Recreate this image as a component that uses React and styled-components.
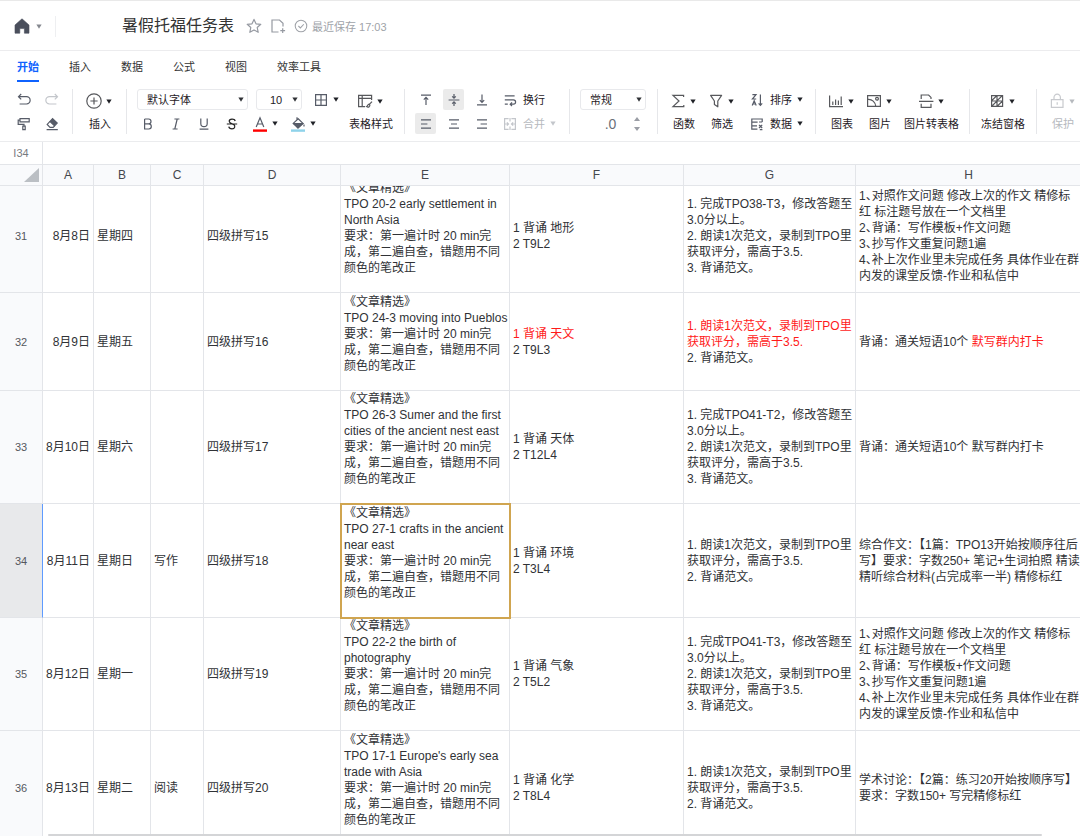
import React, { useEffect, useRef, useState } from 'react';
import styled, { createGlobalStyle, css } from 'styled-components';

const columns = [
  { name: 'A', width: 51 },
  { name: 'B', width: 57 },
  { name: 'C', width: 53 },
  { name: 'D', width: 137 },
  { name: 'E', width: 169 },
  { name: 'F', width: 174 },
  { name: 'G', width: 172 },
  { name: 'H', width: 226 },
];

const red = (text) => ({ text, red: true });

// list number followed by a half-width 、
const item = (number, text) => [{ text: `${number}、`, marker: true }, text];

const reading = (...title) => [
  '《文章精选》',
  ...title,
  '要求：第一遍计时 20 min完',
  '成，第二遍自查，错题用不同',
  '颜色的笔改正',
  ' ',
];

const speakingFull = (task) => [
  `1. 完成${task}，修改答题至`,
  '3.0分以上。',
  '2. 朗读1次范文，录制到TPO里',
  '获取评分，需高于3.5.',
  '3. 背诵范文。',
];

const speakingShort = [
  '1. 朗读1次范文，录制到TPO里',
  '获取评分，需高于3.5.',
  '2. 背诵范文。',
];

const writingReview = [
  item(1, '对照作文问题 修改上次的作文 精修标'),
  '红 标注题号放在一个文档里',
  item(2, '背诵：写作模板+作文问题'),
  item(3, '抄写作文重复问题1遍'),
  item(4, '补上次作业里未完成任务 具体作业在群'),
  '内发的课堂反馈-作业和私信中',
];

const rows = [
  {
    id: 31,
    height: 114,
    cells: [
      ['8月8日'], ['星期四'], [], ['四级拼写15'],
      reading('TPO 20-2 early settlement in', 'North Asia'),
      ['1 背诵 地形', '2 T9L2'],
      speakingFull('TPO38-T3'),
      writingReview,
    ],
  },
  {
    id: 32,
    height: 98,
    cells: [
      ['8月9日'], ['星期五'], [], ['四级拼写16'],
      reading('TPO 24-3 moving into Pueblos'),
      [red('1 背诵 天文'), '2 T9L3'],
      [red(speakingShort[0]), red(speakingShort[1]), speakingShort[2]],
      [['背诵：通关短语10个 ', red('默写群内打卡')]],
    ],
  },
  {
    id: 33,
    height: 113,
    cells: [
      ['8月10日'], ['星期六'], [], ['四级拼写17'],
      reading('TPO 26-3 Sumer and the first', 'cities of the ancient nest east'),
      ['1 背诵 天体', '2 T12L4'],
      speakingFull('TPO41-T2'),
      ['背诵：通关短语10个 默写群内打卡'],
    ],
  },
  {
    id: 34,
    height: 114,
    cells: [
      ['8月11日'], ['星期日'], ['写作'], ['四级拼写18'],
      reading('TPO 27-1 crafts in the ancient', 'near east'),
      ['1 背诵 环境', '2 T3L4'],
      speakingShort,
      [
        '综合作文：【1篇：TPO13开始按顺序往后',
        '写】要求：字数250+ 笔记+生词拍照 精读',
        '精听综合材料(占完成率一半) 精修标红',
      ],
    ],
  },
  {
    id: 35,
    height: 113,
    cells: [
      ['8月12日'], ['星期一'], [], ['四级拼写19'],
      reading('TPO 22-2 the birth of', 'photography'),
      ['1 背诵 气象', '2 T5L2'],
      speakingFull('TPO41-T3'),
      writingReview,
    ],
  },
  {
    id: 36,
    height: 114,
    cells: [
      ['8月13日'], ['星期二'], ['阅读'], ['四级拼写20'],
      reading("TPO 17-1 Europe's early sea", 'trade with Asia'),
      ['1 背诵 化学', '2 T8L4'],
      speakingShort,
      ['学术讨论：【2篇：练习20开始按顺序写】', '要求：字数150+ 写完精修标红'],
    ],
  },
];

const tabs = ['开始', '插入', '数据', '公式', '视图', '效率工具'];

// icons, all on a 16 x 16 box
const Icon = ({ size = 16, children }) => (
  <svg width={size} height={size} viewBox="0 0 16 16" fill="none" stroke="currentColor" strokeWidth="1.2" aria-hidden="true">
    {children}
  </svg>
);

const icons = {
  home: <path d="M8 .8 L15 7 V15.2 H10.4 V10.6 H5.8 V15.2 H1 V7 Z" fill="currentColor" strokeWidth="0.6" strokeLinejoin="round" />,
  star: <path d="M8 1.4 L10 5.8 L14.8 6.3 L11.2 9.5 L12.2 14.3 L8 11.9 L3.8 14.3 L4.8 9.5 L1.2 6.3 L6 5.8 Z" strokeLinejoin="round" />,
  docAdd: <path d="M8.5 14 H2 V2 H9.5 L13 5.2 V8.5 M12.7 10.2 V15 M10.3 12.6 H15.1" />,
  saved: <><circle cx="8" cy="8" r="6.6" /><path d="M5 8 L7.3 10.2 L11.2 6" /></>,
  undo: <path d="M5.2 2 L2.5 4.7 L5.2 7.4 M2.7 4.7 H10.5 A3.4 3.4 0 0 1 10.5 12 H3.6" />,
  redo: <path d="M10.8 2 L13.5 4.7 L10.8 7.4 M13.3 4.7 H5.5 A3.4 3.4 0 0 0 5.5 12 H12.4" />,
  painter: <path d="M4 2.6 H13.2 V5.8 H4 Z M4 4.2 H2.2 V8.4 H8 V10.4 M6.8 10.2 H9.2 V13.6 H6.8 Z" />,
  eraser: <><path d="M8.6 2.6 L13.2 7 L10.6 9.8 L6 5.4 Z" fill="currentColor" /><path d="M6 5.4 L3.2 8.4 L6 11.4 H9.2 L10.6 9.8 M2.6 13.6 H13.8" /></>,
  plus: <><circle cx="8" cy="8" r="7.2" /><path d="M8 4.4 V11.6 M4.4 8 H11.6" /></>,
  bold: <path d="M4.6 3 H8.6 A2.4 2.4 0 0 1 8.6 7.8 H4.6 M8.6 7.8 A2.6 2.6 0 0 1 8.8 13 H4.6 V3" />,
  italic: <path d="M6.4 3 H11.4 M4.6 13 H9.6 M9.2 3 L6.8 13" />,
  underline: <path d="M4.8 2.6 V7.4 A3.2 3.2 0 0 0 11.2 7.4 V2.6 M3.6 13.2 H12.4" />,
  strike: <path d="M11.2 5 C10.6 2.4 5.2 2.4 5.2 5.2 C5.2 7.2 8 7.6 9.4 8.4 C11.8 9.6 11 12.8 8 12.8 C6 12.8 5 11.8 4.8 10.6 M2.8 8 H13.2" stroke="#222" />,
  fontColor: <><path d="M4.2 11 L8 1.8 L11.8 11 M5.4 8 H10.6" /><path d="M1 14.6 H15" stroke="#f00" strokeWidth="2.4" /></>,
  fill: <><path d="M7 1.2 V4.2 M8.2 2.8 L13 7.4 L8 12 L3.2 7.4 Z" /><path d="M4.4 7.6 H12.6 L8 11.8 Z" fill="currentColor" /><path d="M14 8.4 V10.6" /><path d="M1 14.6 H15" stroke="#8fd3ea" strokeWidth="2.4" /></>,
  borders: <path d="M2.6 2.6 H13.4 V13.4 H2.6 Z M8 2.6 V13.4 M2.6 8 H13.4" />,
  tableStyle: <><path d="M8 13.6 H1.6 V2.4 H14.6 V7 M1.6 5.4 H14.6 M5.2 2.4 V13.6" /><path d="M15 8.6 L12.6 11.2 M12.6 11.2 C10.6 10.6 11 13 9.6 13.6 C11.4 14.8 13.6 13.4 12.6 11.2" /></>,
  top: <path d="M3 3.2 H13 M8 13 V5.6 M5.8 7.6 L8 5.4 L10.2 7.6" />,
  middle: <path d="M2.6 8 H13.4 M8 2 V6 M6.2 4.4 L8 6.2 L9.8 4.4 M8 14 V10 M6.2 11.6 L8 9.8 L9.8 11.6" />,
  bottom: <path d="M3 12.8 H13 M8 2.6 V10.2 M5.8 8.2 L8 10.4 L10.2 8.2" />,
  left: <path d="M3 3.8 H13 M3 8 H9.4 M3 12.2 H13" />,
  center: <path d="M3 3.8 H13 M5 8 H11 M3 12.2 H13" />,
  right: <path d="M3 3.8 H13 M6.6 8 H13 M3 12.2 H13" />,
  wrap: <path d="M2.8 3.8 H12.6 M2.8 7.8 H11.4 A2.2 2.2 0 0 1 11.4 12.2 H8.6 M10 10.4 L8.2 12.2 L10 14 M2.8 12.2 H5.8" />,
  merge: <path d="M6.6 2.6 H2.6 V13.4 H6.6 M9.4 2.6 H13.4 V13.4 H9.4 M8 2 V5.4 M8 10.6 V14 M2.8 8 H6.4 M4.9 6.4 L6.5 8 L4.9 9.6 M13.2 8 H9.6 M11.1 6.4 L9.5 8 L11.1 9.6" />,
  sum: <path d="M13.6 4 V2.4 H3 L9 8 L3 13.6 H13.8 V12" />,
  filter: <path d="M2.6 2.4 H13.6 L9.8 8 V13.8 L6.4 11.6 V8 Z" strokeLinejoin="round" />,
  sort: <path d="M3.4 2.6 H7 L3.4 7 H7.2 M3.2 13.6 L5.2 8.8 L7.2 13.6 M4 12 H6.4 M11.4 2.4 V13.4 M9.6 11.4 L11.4 13.4 L13.2 11.4" />,
  data: <path d="M13.2 6 V3 H2.8 V6.2 H8.6 M2.8 9.8 H8 M2.8 6 V13.2 H8.4 M10 6 H13.2 M10 8.8 L13.2 12 M13.2 8.8 L10 12 M10.8 13.6 H13.4" />,
  chart: <path d="M1.6 2.4 V13.6 H15 M4.8 12 V8.4 M7.6 12 V6.4 M10.4 12 V7.4 M13.2 12 V3.4" />,
  image: <><path d="M1.6 2.6 H14.4 V13.4 H1.6 Z M1.8 6.4 C6 6 9.4 9 9.8 13.4" /><circle cx="11" cy="5.8" r="1.4" /></>,
  imageTable: <path d="M3.2 6 V2 H10.6 L13 4.4 V6 M1 8.4 H15.4 M3.2 10.8 V14.4 H13 V10.8" />,
  freeze: <path d="M2.6 2.6 H13.6 V13.4 H2.6 Z M8 2.6 V13.4 M2.6 8 H13.6 M3 7.4 L7.4 3 M8.4 7.4 L13.2 2.8 M3 13 L7.6 8.4 M8.4 13 L13.2 8.4" />,
  lock: <path d="M2.4 6.6 H14 V14.4 H2.4 Z M5 6.4 V4.4 A3.2 3.2 0 0 1 11.4 4.4 V6.4 M8.2 9.2 V11.8" />,
};

const Caret = () => (
  <CaretBox>
    <svg width="6" height="5" viewBox="0 0 6 5" aria-hidden="true">
      <path d="M.4 .5 H5.6 L3 4.8 Z" fill="currentColor" />
    </svg>
  </CaretBox>
);

const Tool = ({ icon, label, caret, ...rest }) => (
  <ToolButton type="button" aria-label={label} {...rest}>
    <IconBox><Icon>{icons[icon]}</Icon></IconBox>
    {caret && <Caret />}
  </ToolButton>
);

const TextTool = ({ icon, text, caret, muted }) => (
  <ToolButton type="button" $muted={muted}>
    <IconBox><Icon>{icons[icon]}</Icon></IconBox>
    <ToolText>{text}</ToolText>
    {caret && <Caret />}
  </ToolButton>
);

const BigTool = ({ icon, text, muted }) => (
  <BigButton type="button" $muted={muted}>
    <BigIcon>
      <Icon>{icons[icon]}</Icon>
      <Caret />
    </BigIcon>
    <span>{text}</span>
  </BigButton>
);

const Select = ({ label, width, indent, options }) => (
  <SelectBox $width={width}>
    <SelectInput aria-label={label} $indent={indent}>
      {options.map((option) => (
        <option key={option}>{option}</option>
      ))}
    </SelectInput>
    <SelectCaret><Caret /></SelectCaret>
  </SelectBox>
);

const Toolbar = () => (
  <ToolbarRow>
    <Group $left={13} $right={10}>
      <Stack>
        <Line>
          <Tool icon="undo" label="撤销" />
          <Tool icon="redo" label="重做" $muted />
        </Line>
        <Line>
          <Tool icon="painter" label="格式刷" />
          <Tool icon="eraser" label="清除格式" />
        </Line>
      </Stack>
    </Group>
    <Group $left={13} $right={12}>
      <BigTool icon="plus" text="插入" />
    </Group>
    <Group $left={10} $right={11} $gap={8}>
      <Stack>
        <Line $gap={8}>
          <Select label="字体" width={111} indent={9} options={['默认字体', '宋体', '黑体']} />
          <Select label="字号" width={46} indent={13} options={['10', '11', '12', '14']} />
          <Tool icon="borders" label="边框" caret />
        </Line>
        <Line>
          <Tool icon="bold" label="加粗" />
          <Tool icon="italic" label="斜体" />
          <Tool icon="underline" label="下划线" />
          <Tool icon="strike" label="删除线" />
          <Tool icon="fontColor" label="字体颜色" caret />
          <Tool icon="fill" label="填充颜色" caret />
        </Line>
      </Stack>
      <BigTool icon="tableStyle" text="表格样式" />
    </Group>
    <Group $left={10} $right={11}>
      <Stack>
        <Line>
          <Tool icon="top" label="顶端对齐" />
          <Tool icon="middle" label="垂直居中" $active />
          <Tool icon="bottom" label="底端对齐" />
          <TextTool icon="wrap" text="换行" />
        </Line>
        <Line>
          <Tool icon="left" label="左对齐" $active />
          <Tool icon="center" label="水平居中" />
          <Tool icon="right" label="右对齐" />
          <TextTool icon="merge" text="合并" caret muted />
        </Line>
      </Stack>
    </Group>
    <Group $left={10} $right={11}>
      <Stack>
        <Line>
          <Select label="数字格式" width={66} indent={9} options={['常规', '数值', '货币']} />
        </Line>
        <Line $justify="flex-end">
          <DecimalButton type="button" aria-label="小数位数">.0</DecimalButton>
          <Spinner>
            <SpinButton type="button" aria-label="增加小数位">
              <svg width="6" height="4" viewBox="0 0 6 4"><path d="M0 4 L3 0 L6 4 Z" fill="currentColor" /></svg>
            </SpinButton>
            <SpinButton type="button" aria-label="减少小数位">
              <svg width="6" height="4" viewBox="0 0 6 4"><path d="M0 0 L3 4 L6 0 Z" fill="currentColor" /></svg>
            </SpinButton>
          </Spinner>
        </Line>
      </Stack>
    </Group>
    <Group $left={12} $right={10} $gap={10}>
      <BigTool icon="sum" text="函数" />
      <BigTool icon="filter" text="筛选" />
      <Stack>
        <TextTool icon="sort" text="排序" caret />
        <TextTool icon="data" text="数据" caret />
      </Stack>
    </Group>
    <Group $left={12} $right={10} $gap={10}>
      <BigTool icon="chart" text="图表" />
      <BigTool icon="image" text="图片" />
      <BigTool icon="imageTable" text="图片转表格" />
    </Group>
    <Group $left={11} $right={11}>
      <BigTool icon="freeze" text="冻结窗格" />
    </Group>
    <Group $left={12} $right={0}>
      <BigTool icon="lock" text="保护" muted />
    </Group>
  </ToolbarRow>
);

const CellLine = ({ line }) => {
  const parts = Array.isArray(line) ? line : [line];
  return (
    <TextLine>
      {parts.map((part, i) => {
        if (part.red) return <RedText key={i}>{part.text}</RedText>;
        if (part.marker) return <Marker key={i}>{part.text}</Marker>;
        return <span key={i}>{part}</span>;
      })}
    </TextLine>
  );
};

const Sheet = () => {
  const scroller = useRef(null);

  // the sheet opens slightly scrolled, with row 31 partly under the header
  useEffect(() => {
    scroller.current.scrollTop = 7;
  }, []);

  return (
    <SheetArea>
      <Scroller ref={scroller}>
        <Table>
          <colgroup>
            <Col $width={43} />
            {columns.map((col) => (
              <Col key={col.name} $width={col.width} />
            ))}
          </colgroup>
          <thead>
            <tr>
              <HeadCell aria-label="全选">
                <Corner width="15" height="14" viewBox="0 0 15 14"><path d="M15 0 V14 H0 Z" fill="#bbbfc4" /></Corner>
              </HeadCell>
              {columns.map((col) => (
                <HeadCell key={col.name} scope="col">{col.name}</HeadCell>
              ))}
            </tr>
          </thead>
          <tbody>
            {rows.map((row) => (
              <Row key={row.id} $height={row.height}>
                <RowHead scope="row" $selected={row.id === 34}>{row.id}</RowHead>
                {row.cells.map((lines, i) => (
                  <Cell
                    key={columns[i].name}
                    $right={i === 0}
                    $marked={row.id === 34 && columns[i].name === 'E'}
                  >
                    {lines.map((line, n) => (
                      <CellLine key={n} line={line} />
                    ))}
                  </Cell>
                ))}
              </Row>
            ))}
          </tbody>
        </Table>
      </Scroller>
      <ScrollThumb />
    </SheetArea>
  );
};

const App = () => {
  const [tab, setTab] = useState('开始');
  const [formula, setFormula] = useState('');

  return (
    <Page>
      <GlobalStyle />
      <Header>
        <HomeButton type="button" aria-label="首页">
          <Icon>{icons.home}</Icon>
          <Caret />
        </HomeButton>
        <Title>暑假托福任务表</Title>
        <HeaderButton type="button" aria-label="收藏"><Icon>{icons.star}</Icon></HeaderButton>
        <HeaderButton type="button" aria-label="添加到"><Icon>{icons.docAdd}</Icon></HeaderButton>
        <SaveState><Icon size={14}>{icons.saved}</Icon>最近保存 17:03</SaveState>
      </Header>
      <Tabs>
        {tabs.map((name) => (
          <Tab key={name} type="button" $active={name === tab} onClick={() => setTab(name)}>
            {name}
          </Tab>
        ))}
      </Tabs>
      <Toolbar />
      <FormulaBar>
        <NameBox aria-label="单元格" defaultValue="I34" />
        <FormulaInput aria-label="编辑栏" value={formula} onChange={(e) => setFormula(e.target.value)} />
      </FormulaBar>
      <Sheet />
    </Page>
  );
};

const GlobalStyle = createGlobalStyle`
  * {
    box-sizing: border-box;
  }
  body {
    margin: 0;
    background: #fff;
    overflow: hidden;
  }
  body, button, input, select {
    font-family: "Liberation Sans", "Noto Sans CJK SC", sans-serif;
  }
  button {
    padding: 0;
    border: 0;
    background: none;
    cursor: pointer;
  }
  svg {
    display: block;
    flex: none;
  }
`;

const Page = styled.div`
  display: flex;
  flex-direction: column;
  height: 100vh;
  color: #303236;
`;

const Header = styled.header`
  display: flex;
  align-items: center;
  height: 51px;
  padding: 1px 14px 0;
  border-top: 1px solid #e9e9e9;
  border-bottom: 1px solid #ececee;
`;

const HomeButton = styled.button`
  display: flex;
  align-items: center;
  gap: 4px;
  height: 21px;
  padding-right: 11px;
  margin-right: 66px;
  border-right: 1px solid #eeeff1;
  color: #4a4f5c;

  span {
    color: #85888f;
  }
`;

const Title = styled.h1`
  margin: 0 12px 0 0;
  font-size: 16px;
  font-weight: 400;
  line-height: 24px;
  color: #333;
  white-space: nowrap;
`;

const HeaderButton = styled.button`
  margin-right: 8px;
  color: #9599a1;
`;

const SaveState = styled.span`
  display: flex;
  align-items: center;
  gap: 4px;
  font-size: 11px;
  color: #a0a3a9;
  white-space: nowrap;
`;

const Tabs = styled.nav`
  display: flex;
  gap: 30px;
  height: 31px;
  padding-left: 17px;
`;

const Tab = styled.button`
  font-size: 11px;
  border-bottom: 2px solid transparent;
  color: #333;

  ${(props) => props.$active && css`
    color: #0f62fe;
    font-weight: 700;
    border-bottom-color: #0f62fe;
  `}
`;

const ToolbarRow = styled.div`
  display: flex;
  padding: 7px 0;
  border-bottom: 1px solid #ebecee;
  overflow: hidden;
`;

const Group = styled.div`
  display: flex;
  flex: none;
  gap: ${(props) => props.$gap || 0}px;
  padding: 0 ${(props) => props.$right}px 0 ${(props) => props.$left}px;
  border-right: 1px solid #e6e7ea;

  &:last-child {
    border-right: 0;
  }
`;

const Stack = styled.div`
  display: flex;
  flex-direction: column;
  gap: 3px;
`;

const Line = styled.div`
  display: flex;
  justify-content: ${(props) => props.$justify || 'flex-start'};
  gap: ${(props) => props.$gap || 7}px;
`;

const CaretBox = styled.span`
  display: flex;
  align-items: center;
  justify-content: center;
  width: 10px;
  color: inherit;
`;

const ToolButton = styled.button`
  display: flex;
  align-items: center;
  height: 21px;
  border-radius: 2px;
  font-size: 11px;
  color: ${(props) => (props.$muted ? '#b6b9be' : '#1f2126')};
  background: ${(props) => (props.$active ? '#ebebeb' : 'transparent')};

  svg {
    color: ${(props) => (props.$muted ? '#c3c6cb' : 'inherit')};
  }
`;

const IconBox = styled.span`
  display: flex;
  align-items: center;
  justify-content: center;
  width: 21px;
  height: 21px;
  color: #575c68;
`;

const ToolText = styled.span`
  margin: 0 3px;
  line-height: 16px;
  white-space: nowrap;
`;

const BigButton = styled.button`
  display: flex;
  flex-direction: column;
  align-items: center;
  justify-content: space-between;
  min-width: 28px;
  height: 45px;
  padding: 4px 0 2px;
  font-size: 11px;
  line-height: 16px;
  color: ${(props) => (props.$muted ? '#b6b9be' : '#1f2126')};
  white-space: nowrap;
`;

const BigIcon = styled.span`
  display: flex;
  align-items: center;
  gap: 2px;

  > svg {
    opacity: 0.75;
  }
`;

const SelectBox = styled.div`
  position: relative;
  width: ${(props) => props.$width}px;
  height: 21px;
`;

const SelectInput = styled.select`
  appearance: none;
  width: 100%;
  height: 21px;
  padding: 0 12px 0 ${(props) => props.$indent}px;
  border: 1px solid #e8e9ec;
  border-radius: 3px;
  background: #fff;
  font-size: 11px;
  color: #1f2126;
`;

const SelectCaret = styled.span`
  position: absolute;
  top: 8px;
  right: 2px;
  pointer-events: none;
`;

const DecimalButton = styled.button`
  width: 21px;
  height: 21px;
  font-size: 14px;
  color: #6b6f79;
`;

const Spinner = styled.div`
  display: flex;
  flex-direction: column;
  justify-content: center;
  gap: 6px;
  width: 18px;
`;

const SpinButton = styled.button`
  display: flex;
  justify-content: center;
  color: #9a9da5;
`;

const FormulaBar = styled.div`
  display: flex;
  height: 23px;
  border-bottom: 1px solid #e3e5e9;
`;

const NameBox = styled.input`
  width: 43px;
  padding: 0;
  border: 0;
  border-right: 1px solid #e3e5e9;
  font-size: 11px;
  text-align: center;
  color: #777a80;
`;

const FormulaInput = styled.input`
  flex: 1;
  padding: 0 6px;
  border: 0;
  outline: 0;
  font-size: 12px;
`;

const SheetArea = styled.main`
  position: relative;
  flex: 1;
  min-height: 0;
`;

const Scroller = styled.div`
  height: 100%;
  overflow: auto;
  scrollbar-width: none;
`;

const ScrollThumb = styled.div`
  position: absolute;
  left: 48px;
  right: 38px;
  bottom: 0;
  height: 2px;
  border-radius: 2px;
  background: #d4d5d7;
`;

const Table = styled.table`
  table-layout: fixed;
  width: 1082px;
  border-collapse: separate;
  border-spacing: 0;
  font-size: 12px;
`;

const Col = styled.col`
  width: ${(props) => props.$width}px;
`;

const HeadCell = styled.th`
  position: sticky;
  top: 0;
  z-index: 1;
  height: 21px;
  padding: 0;
  border-right: 1px solid #e3e5e9;
  border-bottom: 1px solid #e3e5e9;
  background: #f9fafc;
  font-weight: 400;
  line-height: 16px;
  color: #44474d;
`;

const Corner = styled.svg`
  margin: 0 3px 0 auto;
`;

const Row = styled.tr`
  height: ${(props) => props.$height}px;
`;

const RowHead = styled.th`
  padding: 0;
  border-right: 1px solid ${(props) => (props.$selected ? '#5e9bff' : '#e3e5e9')};
  border-bottom: 1px solid #e3e5e9;
  background: ${(props) => (props.$selected ? '#e8e9eb' : '#f9fafc')};
  font-size: 11px;
  font-weight: 400;
  color: #55585e;
`;

const Cell = styled.td`
  padding: 0 3px;
  border-right: 1px solid #e3e5e9;
  border-bottom: 1px solid #e3e5e9;
  text-align: ${(props) => (props.$right ? 'right' : 'left')};
  vertical-align: middle;

  ${(props) => props.$marked && css`
    outline: 2px solid #d0a550;
    outline-offset: -1px;
  `}
`;

const TextLine = styled.div`
  height: 16px;
  line-height: 16px;
  white-space: pre;
`;

const RedText = styled.span`
  color: #ff1a1a;
`;

const Marker = styled.span`
  font-feature-settings: "halt";
`;

export default App;
